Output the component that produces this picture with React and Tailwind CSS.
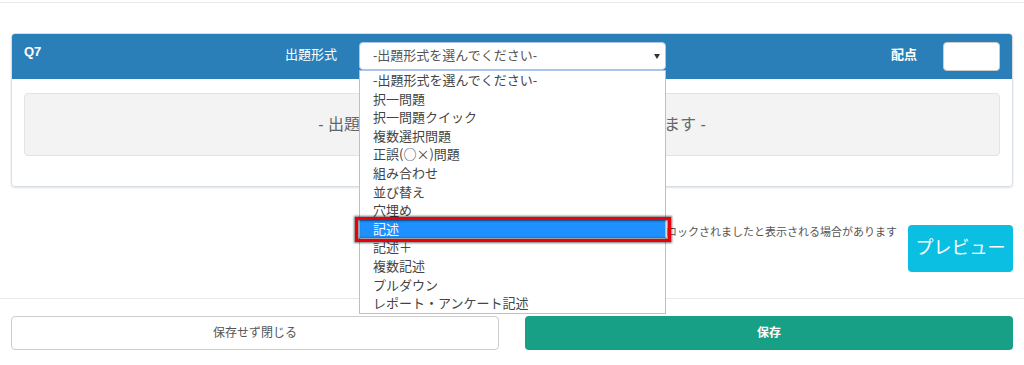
const options = [
  '-出題形式を選んでください-',
  '択一問題',
  '択一問題クイック',
  '複数選択問題',
  '正誤(○×)問題',
  '組み合わせ',
  '並び替え',
  '穴埋め',
  '記述',
  '記述＋',
  '複数記述',
  'プルダウン',
  'レポート・アンケート記述',
]

const selected = '記述'

export default function App() {
  return (
    <div className="w-[1024px] h-[365px] overflow-hidden bg-white text-[#555] font-['Liberation_Sans','Noto_Sans_CJK_JP',sans-serif]">
      <div className="h-[3px] border-b border-[#e8e8e8]" />

      <div className="px-[11px] pt-[30px]">
        <div className="rounded-[4px] border border-[#d6dde4] shadow-[0_1px_2px_rgba(0,0,0,0.12)]">
          <div className="h-[45px] bg-[#2b7fb8] flex items-start pl-[12px] pr-[12px] rounded-t-[3px]">
            <span className="w-[261px] pt-[11px] text-[13px] leading-[14px] font-bold text-white">Q7</span>
            <span className="w-[74px] pt-[13px] text-[13px] leading-[16px] text-white">出題形式</span>
            <div className="relative z-10 mt-[8px] w-[307px]">
              <div className="h-[28px] rounded-[4px] border border-[#a9c7e8] bg-white flex items-center pl-[13px] pr-[4px]">
                <span className="flex-1 text-[13px] text-[#555]">-出題形式を選んでください-</span>
                <svg width="6" height="5" viewBox="0 0 6 5" className="mr-[1px]">
                  <path d="M0 0 L6 0 L3 5 Z" fill="#333" />
                </svg>
              </div>
              <div className="absolute left-0 top-full w-[307px] border border-[#a9c3ea] bg-white font-['Noto_Sans_CJK_JP','Liberation_Sans',sans-serif]">
                {options.map(opt => (
                  <div
                    key={opt}
                    className={`h-[18.6px] leading-[18.6px] pl-[13px] text-[13px] whitespace-nowrap ${opt === selected ? 'bg-[#1e90ff] text-white' : 'text-[#444]'}`}
                  >
                    {opt}
                  </div>
                ))}
                <div className="absolute left-[-5px] top-[146px] w-[316px] h-[25px] border-[3px] border-[#e8000b] shadow-[0_0_2px_1px_rgba(0,0,0,0.55),inset_0_0_2px_1px_rgba(0,0,0,0.5)] pointer-events-none" />
              </div>
            </div>
            <div className="flex-1" />
            <span className="pt-[13px] text-[13px] leading-[16px] font-bold text-white mr-[26px]">配点</span>
            <div className="mt-[8px] w-[57px] h-[29px] rounded-[4px] border border-[#ccc] bg-white" />
          </div>

          <div className="px-[12px] pt-[14px] pb-[30px] bg-white rounded-b-[4px]">
            <div className="h-[63px] rounded-[4px] border border-[#e3e3e3] bg-[#f3f3f3] flex items-center justify-center text-[16px] text-[#666]">
              - 出題形式を選択すると問題の入力欄が表示されます -
            </div>
          </div>
        </div>

        <div className="mt-[38px] flex justify-end items-start">
          <span className="text-[11px] leading-[12px] mt-[1px] text-[#555] mr-[11px]">
            ※プレビューを開くとポップアップがブロックされましたと表示される場合があります
          </span>
          <button className="w-[105px] h-[47px] rounded-[4px] bg-[#0bbfe2] text-white text-[18px]">
            プレビュー
          </button>
        </div>
      </div>

      <div className="mt-[26px] border-t border-[#e8e8e8]" />

      <div className="px-[11px] pt-[17px] grid grid-cols-2 gap-[26px]">
        <button className="h-[34px] rounded-[4px] border border-[#ccc] bg-white text-[12px] text-[#555]">
          保存せず閉じる
        </button>
        <button className="h-[34px] rounded-[4px] bg-[#17a086] text-[12px] font-bold text-white">
          保存
        </button>
      </div>
    </div>
  )
}
